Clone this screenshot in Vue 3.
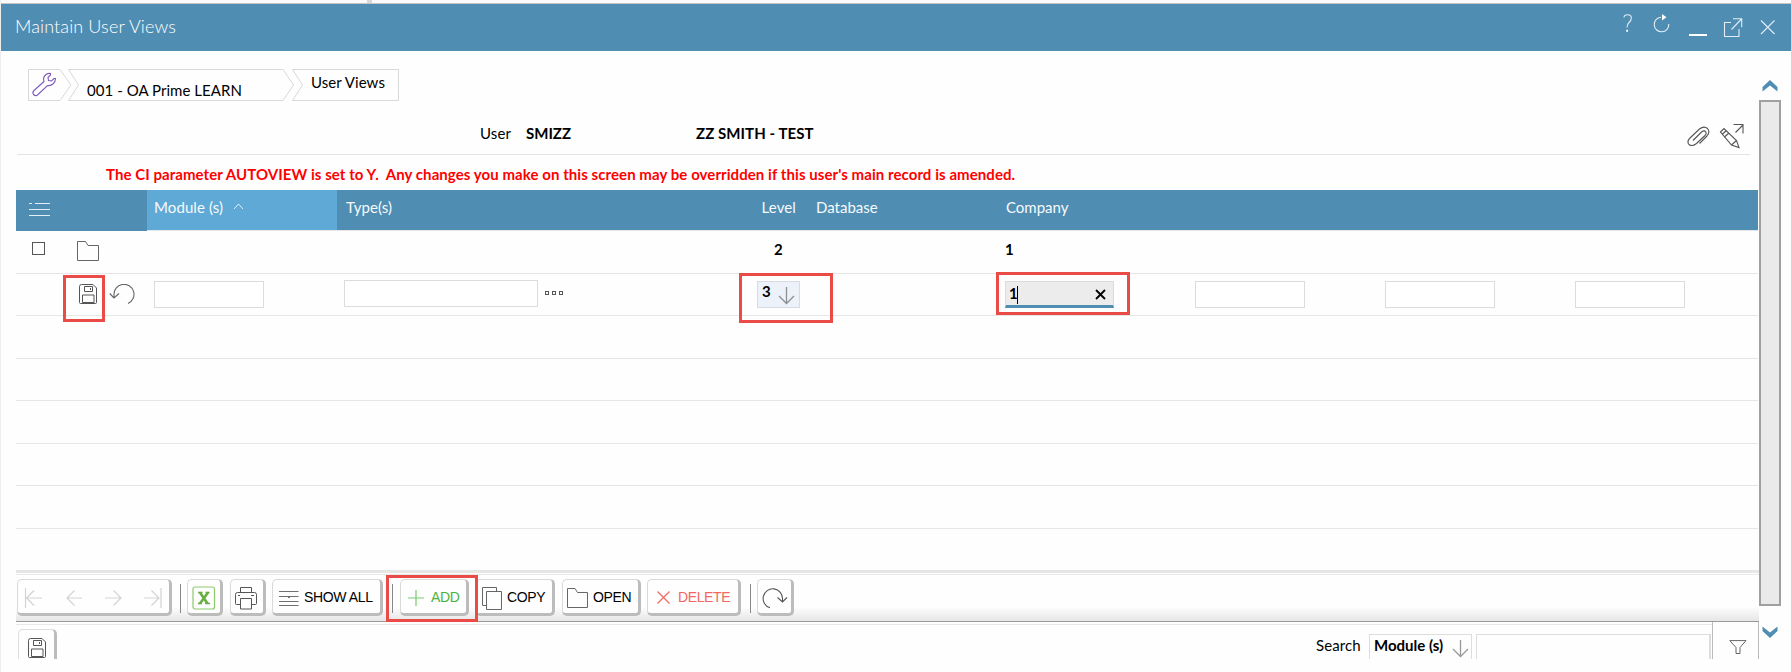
<script setup>
const columns = [
  { key: 'tools', label: '' },
  { key: 'module', label: 'Module (s)', sorted: true },
  { key: 'type', label: 'Type(s)' },
  { key: 'level', label: 'Level' },
  { key: 'database', label: 'Database' },
  { key: 'company', label: 'Company' },
  { key: 'a', label: '' },
  { key: 'b', label: '' },
  { key: 'c', label: '' },
]
const blankRows = 6
</script>

<template>
  <div class="window">
    <div class="strip"><i></i></div>
    <header class="titlebar">
      <h1>Maintain User Views</h1>
      <svg class="win-icons" width="160" height="48" viewBox="0 0 160 48" fill="none" stroke="#e3edf4" stroke-width="1.1">
        <path d="M4 13.500Q4 10.800 7.700 10.800Q11.300 10.800 11.300 14Q11.300 16.500 9 18.500Q7 20.500 7 23.500" />
        <path d="M6.200 26.700h1.800" stroke-width="2" stroke="#fff" />
        <path d="M41 13.200A7.300 7.300 0 1 0 48.800 20" />
        <path d="M42 10l4.500 3.200l-4.500 3.200z" fill="#fff" stroke="none" />
        <path d="M69 31h18" stroke-width="2" stroke="#fff" />
        <path d="M111 18.500h-6.500v14h14.500v-7.500M111.500 25.500L121.500 15M113 14.700h8.700v8.500" />
        <path d="M141 16.500l13.500 13.500M154.500 16.500l-13.500 13.500" />
      </svg>
    </header>

    <div class="body">
      <main class="content">
        <nav class="crumbs">
          <svg class="crumb-shape" width="372" height="32" viewBox="0 0 372 32" fill="none" stroke="#d8d8d8" stroke-width="1">
            <path d="M32 .5H.5V31.500H32M32 .5L43 16L32 31.500" />
            <path d="M255 .5H40.500L50.500 16L40.500 31.500H255L265.500 16Z" />
            <path d="M264.500 .5H370.500V31.500H264.500L274.500 16Z" />
            <path d="M16 12.500Q14.500 8.500 18 5.500Q20.500 4 22.500 4.500V6L20 8.500L20.500 11.500L23.500 12L26 9.500L27.500 9.500Q27.500 13 25 15Q22.500 17 19.500 16.500L9.500 26Q7.500 27.500 5.500 25.500Q4 23.500 6 21.500L16 12.500Z" stroke="#7d5bbd" stroke-width="1.1" />
          </svg>
          <span class="crumb-company">001 - OA Prime LEARN</span>
          <span class="crumb-view">User Views</span>
        </nav>

        <section class="record">
          <span class="user-label">User</span>
          <b class="user-id">SMIZZ</b>
          <b class="user-name">ZZ SMITH - TEST</b>
          <svg class="record-icons" width="60" height="26" viewBox="0 0 60 26" fill="none" stroke="#555" stroke-width="1.1">
            <path d="M7 17.500L15.500 9Q18 7 19.500 8.500Q21 10.500 19 12.500L10.500 20.500Q6 24 3 21.500Q.5 18.500 4 15L13.500 6Q18 2.500 21.500 5.500Q24.500 9 21 13L13.500 20.500" />
            <path d="M34.500 9l3.500-3.500l12.500 12l2.500 7l-7.500-2.500zM36.500 11l4-3.500M39 13.500l4-3.500M45.500 22l5-4.500M52 24.500l.5-1" />
            <path d="M49.500 9.500l7-7M47.500 1.500h9.500v9" />
          </svg>
        </section>

        <p class="warning">The CI parameter AUTOVIEW is set to Y.&nbsp; Any changes you make on this screen may be overridden if this user's main record is amended.</p>

        <section class="table">
          <div class="row head">
            <div v-for="c in columns" :key="c.key" :class="['cell', c.key, { sorted: c.sorted }]">
              <svg v-if="c.key === 'tools'" class="list-icon" width="22" height="16" viewBox="0 0 22 16" stroke="#e4eef5" fill="none">
                <path d="M0 2.500h3M6 2.500h15M0 8.500h21M0 14.500h21" />
              </svg>
              <span v-if="c.label">{{ c.label }}</span>
              <svg v-if="c.sorted" class="sort" width="11" height="7" viewBox="0 0 11 7" fill="none" stroke="#e4f1fa"><path d="M1 6L5.500 1L10 6" /></svg>
            </div>
          </div>

          <div class="row first">
            <div class="cell tools">
              <i class="check"></i>
              <svg class="folder" width="22" height="20" viewBox="0 0 22 20" fill="none" stroke="#666"><path d="M.5 .5H8.500L11 4.500H21.500V19.500H.5Z" /></svg>
            </div>
            <div class="cell"></div>
            <div class="cell"></div>
            <div class="cell level"><b>2</b></div>
            <div class="cell"></div>
            <div class="cell company"><b>1</b></div>
          </div>

          <div class="row edit">
            <div class="cell tools">
              <svg class="save" width="19" height="21" viewBox="0 0 19 21" fill="none" stroke="#555">
                <path d="M2.500 .5H14L17.500 4V18.500Q17.500 19.500 16.500 19.500H1.500Q.5 19.500 .5 18.500V2.500Q.5 .5 2.500 .5ZM5.500 2.500h8v5h-8zM3.500 18.500v-7.500h11.500v7.500zM11.500 4v2" />
              </svg>
              <svg class="undo" width="26" height="21" viewBox="0 0 26 21" fill="none" stroke="#666" stroke-width="1.100"><path d="M5 14V11A10 10 0 1 1 19 19.500M.7 9.500L5 14L10 9.500" /></svg>
            </div>
            <div class="cell"><i class="field"></i></div>
            <div class="cell">
              <i class="field wide"></i>
              <span class="dots"><i></i><i></i><i></i></span>
            </div>
            <div class="cell">
              <div class="select"><b>3</b><svg width="17" height="18" viewBox="0 0 17 18" fill="none" stroke="#8c8f94" stroke-width="1.300"><path d="M8.500 0V16.500M1 9L8.500 16.500L16 9" /></svg></div>
            </div>
            <div class="cell"></div>
            <div class="cell">
              <div class="active"><b>1</b><i class="caret"></i><svg width="11" height="11" viewBox="0 0 11 11" stroke="#000" stroke-width="1.800"><path d="M1 1l9 9M10 1l-9 9" /></svg></div>
            </div>
            <div v-for="n in 3" :key="n" class="cell"><i class="field"></i></div>
          </div>
          <div v-for="n in blankRows" :key="n" class="row blank"></div>
        </section>

        <section class="toolbar">
          <div class="btn nav">
            <svg width="140" height="24" viewBox="0 0 140 24" fill="none" stroke="#d3d3d3" stroke-width="1.200">
              <path d="M1.500 2v20M18 12H3M10 4.500L2.500 12L10 19.500M58 12H43M50.500 4.500L43 12L50.500 19.500M81 12H97M89.500 4.500L97 12L89.500 19.500M120 12H135M127.500 4.500L135 12L127.500 19.500M137 2v20" />
            </svg>
          </div>
          <i class="sep"></i>
          <div class="btn excel">
            <svg width="24" height="24" viewBox="0 0 24 24" fill="none"><rect x="1" y="1" width="21.500" height="22" rx="2" stroke="#8cc96a" stroke-width="1.200" /><path d="M8 6.500L15.500 17.500M16 6.500L8 17.500" stroke="#6aae40" stroke-width="2.600" /><path d="M6 6.500h4.500M13.500 6.500h4M6 17.500h4M13 17.500h5" stroke="#6aae40" stroke-width="1.300" /></svg>
          </div>
          <div class="btn print">
            <svg width="24" height="24" viewBox="0 0 24 24" fill="none" stroke="#555"><path d="M6.500 6V1.500h11V6M6.500 18.500H2.500Q1.500 18.500 1.500 17.500V8.500Q1.500 6.500 3.500 6.500H20.500Q22.500 6.500 22.500 8.500V17.500Q22.500 18.500 21.500 18.500H17.500M6.500 12.500h11v10.500h-11zM4 9.500h2M17 9.500h3" /></svg>
          </div>
          <div class="btn showall">
            <svg width="20" height="16" viewBox="0 0 20 16" fill="none" stroke="#707070"><path d="M0 1.500h19.500M0 6.500h19.500M0 11.500h19.500M0 15.500h19.500M8.500 6.500l1.500 1.500l1.500-1.500" /></svg>
            <span>SHOW ALL</span>
          </div>
          <i class="sep s2"></i>
          <div class="btn add">
            <svg width="16" height="16" viewBox="0 0 16 16" stroke="#77cc6a" stroke-width="1.200"><path d="M8 0v16M0 8h16" /></svg>
            <span>ADD</span>
          </div>
          <div class="btn copy">
            <svg width="20" height="23" viewBox="0 0 20 23" fill="none" stroke="#666"><path d="M4.500 18.500H.5V.5H14.500V4.500M4.500 4.500H19.500V22.500H4.500Z" /></svg>
            <span>COPY</span>
          </div>
          <div class="btn open">
            <svg width="21" height="20" viewBox="0 0 21 20" fill="none" stroke="#666"><path d="M.5 .5H8L10.500 4.500H20.500V19.500H.5Z" /></svg>
            <span>OPEN</span>
          </div>
          <div class="btn delete">
            <svg width="13" height="13" viewBox="0 0 13 13" stroke="#f4675f" stroke-width="1.200"><path d="M.5 .5l12 12M12.500 .5l-12 12" /></svg>
            <span>DELETE</span>
          </div>
          <i class="sep s3"></i>
          <div class="btn refresh">
            <svg width="26" height="21" viewBox="0 0 26 21" fill="none" stroke="#555" stroke-width="1.100"><path d="M8 19.800A9.700 9.700 0 1 1 20.500 11V14M15.500 9.500L20.500 14L25 9.500" /></svg>
          </div>
        </section>

        <section class="footer">
          <div class="save-btn">
            <svg width="19" height="21" viewBox="0 0 19 21" fill="none" stroke="#555">
              <path d="M2.500 .5H14L17.500 4V18.500Q17.500 19.500 16.500 19.500H1.500Q.5 19.500 .5 18.500V2.500Q.5 .5 2.500 .5ZM5.500 2.500h8v5h-8zM3.500 18.500v-7.500h11.500v7.500zM11.500 4v2" />
            </svg>
          </div>
          <span class="search">Search</span>
          <div class="search-col"><b>Module (s)</b><svg width="17" height="18" viewBox="0 0 17 18" fill="none" stroke="#999" stroke-width="1.300"><path d="M8.500 0V16.500M1 9L8.500 16.500L16 9" /></svg></div>
          <i class="search-input"></i>
          <div class="filter"><svg width="18" height="14" viewBox="0 0 18 14" fill="none" stroke="#666"><path d="M.8 .6H17L11 7.500V13.500H7V7.500Z" /></svg></div>
        </section>
      </main>

      <aside class="scroll">
        <svg width="16" height="12" viewBox="0 0 16 12" fill="#4f8db3"><path d="M8 0L15.500 7V11.500L8 5.500L.5 11.500V7Z" /></svg>
        <i class="track"></i>
        <svg width="16" height="12" viewBox="0 0 16 12" fill="#4f8db3"><path d="M8 12L15.500 5V.5L8 6.500L.5 .5V5Z" /></svg>
      </aside>
    </div>

    <i class="mark m1"></i><i class="mark m2"></i><i class="mark m3"></i><i class="mark m4"></i>
  </div>
</template>

<style>
body { margin: 0; background: #fff; }
</style>

<style scoped>
* { box-sizing: border-box; }
.window { position: relative; width: 1791px; height: 672px; overflow: hidden; background: #fefefe; border-left: 1px solid #eee; font: 15px/20px Lato, sans-serif; color: #000; white-space: nowrap; }
.window svg { display: block; flex: none; }
.window i { display: block; flex: none; }
.strip { height: 4px; background: #fafafa; border-bottom: 1px solid #c4c4c4; }
.strip i { width: 5px; height: 3px; margin-left: 366px; background: #d8d8d8; }
.titlebar { height: 47px; background: #4f8db3; display: flex; justify-content: space-between; padding: 0 11px 0 14px; }
h1 { margin: 12px 0 0; font-size: 18px; line-height: 20px; font-weight: 300; color: #fff; letter-spacing: .13px; }
.body { display: flex; }
.content { width: 1743px; margin-left: 15px; height: 608px; overflow: hidden; }

.crumbs { position: relative; height: 32px; margin: 18px 0 0 12px; display: flex; }
.crumb-shape { position: absolute; left: 0; top: 0; }
.crumb-company { width: 224px; margin: 11px 0 0 59px; letter-spacing: .05px; }
.crumb-view { margin-top: 3px; letter-spacing: .06px; }

.record { height: 54px; margin-left: 1px; width: 1733px; border-bottom: 1px solid #e4e4e4; display: flex; padding-top: 22px; }
.user-label { width: 46px; margin-left: 463px; letter-spacing: .15px; }
.user-id { width: 170px; }
.user-name { letter-spacing: .07px; }
.record-icons { margin: 0 4px 0 auto; }
.warning { margin: 9px 0 6px 90px; height: 20px; font-weight: 700; color: #f00; letter-spacing: .067px; }

.table { width: 1742px; }
.row { display: grid; grid-template-columns: 131px 190px 234px 237px 190px 190px 190px 190px 190px; border-bottom: 1px solid #e6e6e6; height: 42px; }
.cell { display: flex; padding-left: 8px; }
.head { height: 41px; color: #f6fafc; }
.head .cell { height: 40px; background: #4f8db3; padding-top: 7px; }
.head .tools { height: 41px; }
.head .module { padding-left: 7px; letter-spacing: .1px; }
.head .type { padding-left: 9px; letter-spacing: .1px; }
.head .sorted { background: #5fa9d6; }
.head .level { justify-content: flex-end; padding-right: 12px; }
.head .level span { letter-spacing: .1px; }
.list-icon { margin: 4px 0 0 5px; }
.sort { margin: 6px 0 0 10px; }
.first { height: 43px; }
.first b { margin-top: 8px; }
.first .level { padding-left: 203px; }
.first .company { padding-left: 7px; }
.check { width: 13px; height: 13px; border: 1px solid #555; margin: 11px 0 0 8px; }
.folder { margin: 10px 0 0 32px; }
.edit .cell { padding-left: 7px; padding-top: 7px; }
.save { margin: 3px 0 0 56px; }
.undo { margin: 3px 0 0 11px; }
.field { width: 110px; height: 27px; border: 1px solid #dcdcdc; background: #fff; }
.field.wide { width: 194px; margin-top: -1px; }
.dots { display: flex; gap: 2px; margin: 10px 0 0 7px; }
.dots i { width: 4px; height: 4px; margin-right: 1px; border: 1px solid #555; }
.select { width: 43px; height: 27px; margin-left: 179px; border: 1px solid #d8dbe0; background: #edf2fa; display: flex; }
.select b { width: 16px; margin: -1px 0 0 4px; }
.select svg { margin-top: 5px; }
.active { width: 109px; height: 27px; border: 1px solid #dcdcdc; border-bottom: 3px solid #4f8db3; background: #ececec; display: flex; }
.active b { margin: 1px 0 0 3px; width: 8px; }
.caret { width: 1px; height: 18px; background: #000; margin-top: 4px; }
.active svg { margin: 7px 0 0 77px; }
.blank { height: 42.500px; }
.blank:last-child { height: 41.500px; border-bottom: 0; }

.toolbar { height: 52px; background: linear-gradient(#fefefe 1px, #e8e8e8 1px, #e8e8e8 2px, transparent 2px), linear-gradient(#fefefe 70%, #e6e6e6); border-top: 3px solid #e6e6e6; border-bottom: 1px solid #999; display: flex; align-items: flex-start; padding: 6px 0 0 1px; font: 14px/18px "Liberation Sans", Arial, sans-serif; letter-spacing: -.38px; }
.btn { height: 37px; border: 1px solid #d9d9d9; border-right: 3px solid #bcbcbc; border-bottom: 3px solid #bcbcbc; border-radius: 5px; background: #fefefe; display: flex; align-items: flex-start; flex: none; }
.nav { width: 155px; padding: 6px 0 0 6px; }
.sep { width: 1px; height: 29px; margin: 5px 6px 0 8px; background: #888; }
.excel { width: 36px; margin-right: 7px; padding: 6px 0 0 4px; }
.print { width: 36px; margin-right: 6px; padding: 6px 0 0 3px; }
.showall { width: 111px; padding: 10px 0 0 6px; }
.showall span { margin: -2px 0 0 5px; }
.sep.s2 { margin: 5px 7px 0 9px; }
.add { width: 69px; color: #49b33c; padding: 10px 0 0 7px; }
.add span { margin: -2px 0 0 7px; }
.copy { width: 80px; margin-left: 6px; padding: 7px 0 0 6px; }
.copy span { margin: 1px 0 0 5px; }
.open { width: 79px; margin: 0 6px 0 7px; padding: 8px 0 0 4px; }
.open span { margin: 0 0 0 5px; }
.delete { width: 94px; color: #f4675f; padding: 11px 0 0 9px; }
.delete span { margin: -3px 0 0 8px; }
.sep.s3 { margin: 5px 6px 0 9px; }
.refresh { width: 37px; padding: 8px 0 0 4px; }

.footer { height: 37px; display: flex; padding-left: 2px; background: linear-gradient(#fefefe 2px, #e8e8e8 2px, #e8e8e8 3px, transparent 3px); }
.save-btn { width: 39px; height: 40px; margin-top: 7px; border: 1px solid #ddd; border-right: 3px solid #bcbcbc; border-radius: 5px 5px 0 0; padding: 8px 0 0 9px; }
.search { margin: 13px 0 0 1259px; width: 53px; letter-spacing: .1px; }
.search-col { width: 103px; height: 40px; margin-top: 12px; border: 1px solid #ddd; display: flex; padding-left: 4px; }
.search-col b { width: 78px; }
.search-col svg { margin-top: 5px; }
.search-input { width: 235px; height: 40px; margin: 12px 1px 0 4px; border: 1px solid #ddd; border-right-width: 2px; }
.filter { width: 47px; background: #fefefe; border-left: 1px solid #bbb; border-right: 1px solid #bbb; padding: 18px 0 0 16px; }

.scroll { width: 22px; display: flex; flex-direction: column; align-items: center; padding-top: 29px; }
.track { width: 22px; height: 506px; margin: 8px 0 20px; background: #eaeaea; border: 2px solid #a0a0a0; }

.mark { position: absolute; border: 3px solid #ea4b46; }
.m1 { left: 62px; top: 275px; width: 42px; height: 47px; }
.m2 { left: 738px; top: 273px; width: 94px; height: 50px; }
.m3 { left: 995px; top: 272px; width: 134px; height: 43px; }
.m4 { left: 385px; top: 575px; width: 92px; height: 47px; }
</style>
